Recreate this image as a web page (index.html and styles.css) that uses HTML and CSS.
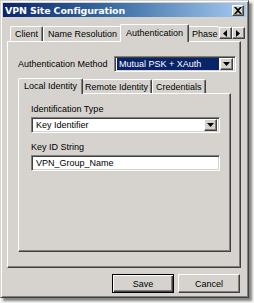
FILE: index.html
```html
<!DOCTYPE html>
<html>
<head>
<meta charset="utf-8">
<link rel="stylesheet" href="styles.css">
</head>
<body>
<div class="window">
  <div class="titlebar">
    <span class="title">VPN Site Configuration</span>
    <span class="close">
      <svg width="8" height="7" viewBox="0 0 8 7"><path d="M0 0h2l2 2 2-2h2L5 3.5 8 7H6L4 5 2 7H0l3-3.5z" fill="#000"/></svg>
    </span>
  </div>
  <div class="body">
    <div class="tabs">
      <div class="tab first">Client</div>
      <div class="tab">Name Resolution</div>
      <div class="tab active">Authentication</div>
      <div class="tab clip">Phase</div>
      <div class="scroll">
        <span class="sbtn"><svg width="4" height="7" viewBox="0 0 4 7"><path d="M4 0v7L0 3.5z"/></svg></span>
        <span class="sbtn"><svg width="4" height="7" viewBox="0 0 4 7"><path d="M0 0v7l4-3.5z"/></svg></span>
      </div>
    </div>
    <div class="panel">
      <div class="method">
        <span class="label">Authentication Method</span>
        <div class="combo wide">
          <span class="value selected">Mutual PSK + XAuth</span>
          <span class="drop"><svg width="7" height="4" viewBox="0 0 7 4"><path d="M0 0h7L3.5 4z"/></svg></span>
        </div>
      </div>
      <div class="inner">
        <div class="tabs small">
          <div class="tab active first">Local Identity</div>
          <div class="tab">Remote Identity</div>
          <div class="tab">Credentials</div>
        </div>
        <div class="panel2">
          <div class="label">Identification Type</div>
          <div class="combo">
            <span class="value">Key Identifier</span>
            <span class="drop"><svg width="7" height="4" viewBox="0 0 7 4"><path d="M0 0h7L3.5 4z"/></svg></span>
          </div>
          <div class="label second">Key ID String</div>
          <div class="field">VPN_Group_Name</div>
        </div>
      </div>
    </div>
    <div class="buttons">
      <div class="btn default">Save</div>
      <div class="btn">Cancel</div>
    </div>
  </div>
</div>
</body>
</html>
```
FILE: styles.css
```css
* { box-sizing: border-box; }
html, body { margin: 0; padding: 0; background: #f4f4f2; }
body {
  font-family: "Liberation Sans", Arial, sans-serif;
  font-size: 9px;
  color: #000;
  width: 254px;
  height: 303px;
  overflow: hidden;
}
.window {
  width: 249px;
  height: 298px;
  background: #d6d3ce;
  border: 1px solid;
  border-color: #d6d3ce #404040 #404040 #d6d3ce;
  box-shadow: inset 1px 1px #fff, inset -1px -1px #808080, 3px 3px 2px rgba(0,0,0,0.45);
  padding: 2px;
  display: flex;
  flex-direction: column;
}
.titlebar {
  height: 14px;
  background: linear-gradient(to right, #0a246a 0%, #3a6ea5 45%, #a6caf0 100%);
  display: flex;
  align-items: center;
  justify-content: space-between;
  padding: 0 2px 0 2px;
}
.title {
  color: #fff;
  font-weight: bold;
  font-size: 9.5px;
  font-family: "DejaVu Sans", "Liberation Sans", sans-serif;
  letter-spacing: -0.15px;
}
.close {
  width: 12px;
  height: 11px;
  background: #d6d3ce;
  border: 1px solid;
  border-color: #fff #404040 #404040 #fff;
  box-shadow: inset -1px -1px #808080;
  display: flex;
  align-items: center;
  justify-content: center;
}
.body {
  padding: 6px 5px 0 4px;
  display: flex;
  flex-direction: column;
}
.tabs {
  display: flex;
  align-items: flex-end;
  height: 18px;
  padding-left: 3px;
  position: relative;
  z-index: 1;
}
.tab {
  height: 15px;
  padding: 0 4px;
  display: flex;
  align-items: center;
  border-top: 1px solid #fff;
  border-left: 1px solid #fff;
  border-right: 1px solid #404040;
  box-shadow: inset -1px 0 #808080;
  border-radius: 2px 2px 0 0;
  white-space: nowrap;
  background: #d6d3ce;
}
.tab.active {
  height: 18px;
  margin: 0 -2px -1px -2px;
  padding: 0 5px 1px 5px;
  position: relative;
  z-index: 2;
}
.tab.first.active { margin-left: -2px; }
.tab.clip {
  padding-right: 1px;
  border-right: none;
  box-shadow: none;
}
.scroll {
  display: flex;
  align-self: flex-end;
  margin-bottom: 2px;
}
.sbtn {
  width: 13px;
  height: 12px;
  background: #d6d3ce;
  border: 1px solid;
  border-color: #fff #404040 #404040 #fff;
  box-shadow: inset -1px -1px #808080;
  display: flex;
  align-items: center;
  justify-content: center;
}
.sbtn svg { fill: #000; }
.panel {
  height: 227px;
  width: 234px;
  border: 1px solid;
  border-color: #fff #404040 #404040 #fff;
  box-shadow: inset -1px -1px #808080;
  padding: 14px 4px 0 10px;
}
.method {
  display: flex;
  align-items: center;
  justify-content: space-between;
}
.combo {
  height: 16px;
  background: #fff;
  border: 1px solid;
  border-color: #808080 #fff #fff #808080;
  box-shadow: inset 1px 1px #404040, inset -1px -1px #d6d3ce;
  display: flex;
  align-items: center;
  padding: 2px;
  width: 189px;
}
.combo.wide { width: 122px; }
.value {
  flex: 1;
  height: 12px;
  display: flex;
  align-items: center;
  padding-left: 2px;
  white-space: nowrap;
}
.value.selected {
  background: #0a246a;
  color: #fff;
  margin-right: 1px;
}
.drop {
  width: 13px;
  height: 12px;
  background: #d6d3ce;
  border: 1px solid;
  border-color: #fff #404040 #404040 #fff;
  box-shadow: inset -1px -1px #808080;
  display: flex;
  align-items: center;
  justify-content: center;
}
.drop svg { fill: #000; }
.inner {
  margin-top: 5px;
  width: 213px;
}
.tabs.small { height: 16px; padding-left: 2px; }
.tabs.small .tab { height: 14px; padding: 0 3px; }
.tabs.small .tab.active { height: 16px; padding: 0 5px 1px 5px; }
.panel2 {
  height: 159px;
  border: 1px solid;
  border-color: #fff #404040 #404040 #fff;
  box-shadow: inset -1px -1px #808080;
  padding: 10px 9px 0 12px;
}
.panel2 .label { margin-bottom: 3px; }
.panel2 .label.second { margin-top: 9px; }
.field {
  height: 16px;
  width: 189px;
  background: #fff;
  border: 1px solid;
  border-color: #808080 #fff #fff #808080;
  box-shadow: inset 1px 1px #404040, inset -1px -1px #d6d3ce;
  padding-left: 4px;
  display: flex;
  align-items: center;
}
.buttons {
  display: flex;
  justify-content: flex-end;
  gap: 4px;
  margin-top: 6px;
  padding-right: 1px;
}
.btn {
  width: 62px;
  height: 19px;
  display: flex;
  align-items: center;
  justify-content: center;
  border: 1px solid;
  border-color: #fff #404040 #404040 #fff;
  box-shadow: inset -1px -1px #808080;
}
.btn.default {
  border: 1px solid #000;
  box-shadow: inset 1px 1px #fff, inset -1px -1px #404040, inset -2px -2px #808080;
}
```
